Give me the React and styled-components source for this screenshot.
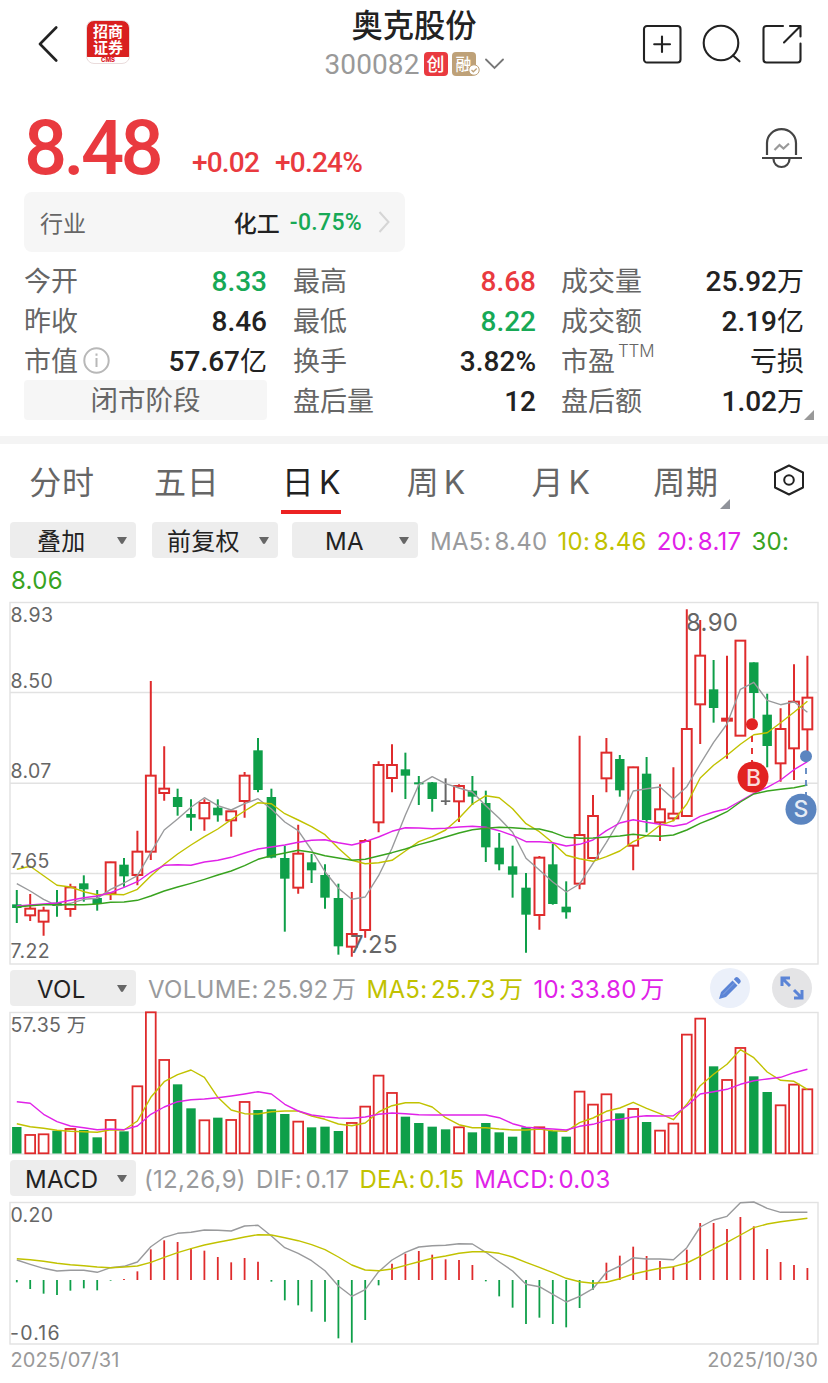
import React from 'react';
import styled, { createGlobalStyle } from 'styled-components';

const GlobalStyle = createGlobalStyle`
  * { box-sizing: border-box; }
  body { margin: 0; background: #fff; }
`;

const RED = '#e93a3f';
const GREEN = '#17a956';
const INK = '#222';
const CHART_FONT = "Inter, 'Noto Sans CJK SC', sans-serif";
const C = { up: '#df2b2c', down: '#0e9f49', gray: '#999a9c', yellow: '#c1c200', pink: '#e022e8', green: '#38a31f', flat: '#666' };

const Page = styled.main`
  width: 828px;
  height: 1383px;
  overflow: hidden;
  background: #fff;
  color: ${INK};
  font-family: Roboto, 'Noto Sans CJK SC', sans-serif;
  white-space: nowrap;
`;

const Header = styled.header`
  display: grid;
  grid-template-columns: 1fr auto 1fr;
  height: 88px;
  padding: 0 26px 0 38px;
`;
const HeaderSide = styled.div`
  display: flex;
  align-items: center;
  justify-content: ${p => (p.$end ? 'flex-end' : 'flex-start')};
  gap: ${p => p.$gap}px;
`;
const Logo = styled.div`
  width: 44px;
  height: 44px;
  margin-top: -4px;
  border-radius: 8px;
  background: linear-gradient(#d9201f 0 36px, #fff 36px);
  border: 1px solid #eadcdc;
  color: #fff;
  text-align: center;
  font: 700 15px/16px 'Noto Sans CJK SC', sans-serif;
  padding-top: 2px;
`;
const LogoCaption = styled.div`
  margin-top: 1px;
  color: #d9201f;
  font: 800 6px/7px Inter, sans-serif;
`;
const TitleBlock = styled.div`
  display: flex;
  flex-direction: column;
  align-items: center;
  transform: translateX(-6px);
`;
const Title = styled.h1`
  margin: 4px 0 3px;
  font: 500 31.3px/40px 'Noto Sans CJK SC', sans-serif;
`;
const CodeRow = styled.div`
  display: flex;
  align-items: center;
  height: 34px;
  color: #999;
  font-size: 28px;
`;
const Code = styled.span`
  margin-right: 4px;
  letter-spacing: 0.1px;
`;
const Badge = styled.span`
  position: relative;
  width: 24px;
  height: 24px;
  margin-right: ${p => p.$right}px;
  border-radius: 4px;
  background: ${p => p.$bg};
  color: #fff;
  text-align: center;
  font: 500 ${p => p.$size}px/23px 'Noto Sans CJK SC', sans-serif;
`;
const BadgeTick = styled.svg`
  position: absolute;
  right: -4px;
  bottom: 0;
`;

const PriceRow = styled.section`
  display: flex;
  align-items: flex-end;
  height: 104px;
  padding: 0 25px 17px 24px;
  color: ${RED};
  font-weight: 500;
`;
const Price = styled.strong`
  font: 500 76px/60px Roboto, sans-serif;
  letter-spacing: -3.7px;
  width: 168px;
  margin-bottom: -3px;
`;
const Change = styled.span`
  font-size: 28px;
  line-height: 30px;
  letter-spacing: -0.8px;
  margin-right: 16px;
  margin-bottom: -3px;
`;
const BellWrap = styled.span`
  margin-left: auto;
  height: 48px;
  svg { display: block; }
`;

const Industry = styled.section`
  display: flex;
  align-items: center;
  width: 381px;
  height: 60px;
  margin-left: 24px;
  padding: 0 15px 0 16px;
  border-radius: 8px;
  background: #f6f6f6;
  color: #666;
  font-size: 23px;
`;
const IndustryName = styled.span`
  margin: 0 10px 0 auto;
  color: ${INK};
  font-weight: 500;
`;
const IndustryChange = styled.span`
  margin-right: 16px;
  color: ${GREEN};
  font-weight: 500;
  letter-spacing: 0.3px;
`;

const Stats = styled.section`
  position: relative;
  display: grid;
  grid-template-columns: 243px 243px 242px;
  grid-auto-rows: 40px;
  column-gap: 26px;
  height: 192px;
  padding: 8px 24px 0 24px;
  border-bottom: 8px solid #f4f4f4;
`;
const Stat = styled.div`
  display: flex;
  justify-content: space-between;
  align-items: center;
  line-height: 40px;
  padding-top: 3px;
  &:nth-child(3n) { margin-left: -1px; }
`;
const StatLabel = styled.span`
  display: flex;
  align-items: center;
  color: #666;
  font-size: 27px;
`;
const StatValue = styled.span`
  color: ${p => p.$color || INK};
  font-size: 28px;
  font-weight: 500;
  span { font-size: 27px; font-weight: 400; }
`;
const Superscript = styled.sup`
  margin-left: 3px;
  font: 300 17px/17px Inter, sans-serif;
  letter-spacing: -0.2px;
  transform: translateY(-10px);
`;
const Phase = styled.div`
  height: 40px;
  border-radius: 4px;
  background: #f6f6f6;
  color: #666;
  text-align: center;
  font-size: 27.5px;
  line-height: 42px;
`;
const Corner = styled.svg`
  position: absolute;
  right: ${p => p.$right}px;
  bottom: ${p => p.$bottom}px;
`;

const Tabs = styled.nav`
  display: grid;
  grid-template-columns: repeat(6, 124.8px) 1fr;
  height: 78px;
`;
const Tab = styled.div`
  position: relative;
  display: flex;
  justify-content: center;
  padding: 15px 1px 0 0;
  height: 70px;
  color: ${p => (p.$active ? INK : '#666')};
  font: 400 32px/48px Inter, 'Noto Sans CJK SC', sans-serif;
  letter-spacing: 0.6px;
  word-spacing: -5px;
  &::after {
    content: '';
    position: absolute;
    bottom: 0;
    width: 60px;
    height: 4px;
    background: ${p => (p.$active ? '#ec2222' : 'transparent')};
  }
`;
const SettingsCell = styled.div`
  padding: 20px 0 0 24px;
`;

const IndicatorBar = styled.div`
  display: flex;
  align-items: center;
  height: ${p => p.$height}px;
  padding: 0 0 ${p => p.$bottom || 0}px 10px;
  font: 400 24px/36px ${CHART_FONT};
`;
const Select = styled.div`
  display: flex;
  align-items: center;
  justify-content: space-between;
  width: 126px;
  height: 36px;
  flex: none;
  margin-right: ${p => p.$right}px;
  padding: 0 8px 0 ${p => p.$left}px;
  border-radius: 4px;
  background: #ededed;
  color: ${INK};
  font-size: 24px;
`;
const SelectLabel = styled.span`
  padding-top: 3px;
  letter-spacing: 0.3px;
`;
const Reading = styled.span`
  margin-right: 10px;
  padding-top: 3px;
  color: ${p => p.$color};
  letter-spacing: 0.3px;
  word-spacing: -3.5px;
`;
const ReadingLine = styled.div`
  height: 40px;
  padding-left: 11px;
  color: ${C.green};
  font: 400 24px/45px ${CHART_FONT};
  letter-spacing: 0.3px;
`;
const RoundButton = styled.span`
  display: grid;
  place-items: center;
  width: 40px;
  height: 40px;
  border-radius: 50%;
  margin-left: ${p => p.$left}px;
  background: ${p => p.$bg};
`;
const Tools = styled.div`
  display: flex;
  margin: 0 16px 0 auto;
`;
const ChartSvg = styled.svg`
  display: block;
  font-family: ${CHART_FONT};
`;
const Dates = styled.footer`
  display: flex;
  justify-content: space-between;
  padding: 1px 10px 0 10.5px;
  color: #999;
  font: 400 20px/22px ${CHART_FONT};
  letter-spacing: 0.15px;
`;

/* Each candle: direction, high, body top, body bottom, low (thirds of a pixel below y=600). */
const candles = `g,870,913,924,969 r,882,926,946,963 r,920,932,965,1007 g,870,908,918,950 r,851,862,927,950 g,826,850,868,905
g,870,894,912,932 r,785,787,880,900 g,774,794,829,860 r,692,755,825,856 r,243,527,755,780 r,439,566,579,602 g,566,591,621,647
g,598,642,653,692 r,598,609,655,692 g,598,623,646,665 r,630,634,661,710 r,516,527,603,653 g,414,451,570,577 g,566,591,773,775
g,737,774,836,995 r,674,761,863,881 g,762,787,811,849 g,793,825,893,926 g,851,894,1039,1064 r,876,1002,1040,1070 r,717,723,990,1013
r,484,495,667,697 r,433,495,534,577 g,458,508,527,597 g,528,547,553,615 g,546,547,597,635 k,535,601,606,615 r,553,558,604,666
g,528,572,590,615 g,572,609,742,786 g,699,743,793,811 g,737,799,824,893 g,819,863,944,1058 r,768,773,945,989 g,732,793,912,914
g,844,920,937,956 r,407,705,851,868 r,585,648,774,776 r,414,458,535,577 g,465,477,571,590 r,500,502,737,811 g,471,521,660,697
r,553,628,667,723 r,502,641,655,664 r,28,387,648,650 r,60,167,313,432 g,180,268,324,368 r,167,356,362,476 r,122,122,407,408
g,187,187,279,356 g,281,344,438,502 r,325,387,490,545 r,193,305,445,540 r,167,293,388,455`
  .split(/\s+/)
  .map(s => s.split(',').map((v, i) => (i ? Number(v) : v)));

const ma5 = [851,873,898,917,910,898,895,868,849,827,758,690,657,622,593,617,630,611,596,627,666,692,750,815,865,898,891,827,745,645,554,530,551,564,576,617,655,697,775,810,846,876,852,790,727,660,573,566,561,597,560,492,427,372,268,247,301,314,305,337];
const ma10 = [808,799,827,856,861,875,884,883,884,868,828,793,762,735,710,687,659,633,608,611,641,660,680,704,745,781,791,788,781,753,725,710,690,655,612,587,593,626,671,695,728,766,776,784,770,753,725,707,676,662,612,534,496,466,433,404,398,368,337,304];
const ma20 = [918,915,912,909,901,893,888,878,862,845,817,796,794,796,786,781,772,759,747,741,735,727,721,719,728,735,725,711,694,683,684,686,685,681,679,682,692,706,725,725,728,738,733,720,692,669,659,667,673,679,671,649,636,626,603,580,562,540,509,485];
const ma30 = [921,917,914,914,914,914,912,907,906,901,888,873,861,850,838,825,813,797,778,767,759,751,757,767,774,781,778,768,758,747,734,723,711,699,689,685,682,683,686,687,697,712,715,714,711,708,703,707,709,705,690,670,654,635,606,582,573,568,563,555];

const volumes = [486,509,507,497,491,495,517,464,499,363,141,284,358,430,465,458,464,410,435,433,447,469,487,485,498,473,424,331,383,455,474,485,493,486,502,474,502,515,487,486,498,515,379,418,387,445,431,471,496,475,208,160,304,344,248,334,381,420,358,372];
const vol5 = [476,485,490,496,499,500,502,494,495,468,397,350,329,315,337,397,435,446,447,440,438,438,453,463,477,482,474,441,422,413,413,426,458,479,488,488,492,495,495,492,497,499,473,459,439,429,412,430,446,464,418,362,328,298,254,278,321,346,349,373];
const vol10 = [410,415,448,470,483,488,494,492,494,483,448,426,410,404,402,398,393,387,380,387,418,438,450,455,459,460,456,448,444,446,449,450,450,450,450,450,458,476,487,490,492,495,484,478,466,463,456,452,453,452,423,387,380,373,358,347,342,337,323,313];

const macd = [382,402,416,420,407,400,406,377,372,349,283,256,261,279,287,306,322,309,320,380,436,451,470,500,550,563,495,391,326,296,288,299,313,315,330,379,424,458,507,488,507,517,459,404,323,302,275,303,318,334,284,204,204,222,186,214,282,321,330,339];
const dif = [315,328,340,348,346,346,352,338,334,321,275,247,235,232,225,226,228,213,211,243,278,295,317,347,393,424,404,350,315,292,276,272,271,266,267,292,320,348,388,395,418,441,424,401,352,333,308,312,312,314,278,216,195,184,143,141,160,172,172,172];
const dea = [311,314,319,325,329,332,336,338,336,333,322,307,293,281,270,262,254,246,239,240,248,257,269,284,306,330,345,347,342,331,320,310,303,295,290,290,295,306,322,337,353,370,380,385,382,371,357,348,340,335,324,304,282,262,240,218,207,200,195,190];

const xAt = i => 16.8 + i * 13.4;

function Line({ data, top, color }) {
  return (
    <polyline
      points={data.map((v, i) => `${xAt(i).toFixed(1)},${(top + v / 3).toFixed(1)}`).join(' ')}
      fill="none"
      stroke={color}
      strokeWidth="1.4"
      strokeLinejoin="round"
    />
  );
}

function Candle({ index, data }) {
  const [kind, high, bodyTop, bodyBottom, low] = data;
  const x = xAt(index);
  const [h, t, b, l] = [high, bodyTop, bodyBottom, low].map(v => 600 + v / 3);
  if (kind === 'r') {
    return (
      <g stroke={C.up} strokeWidth="2">
        <path d={`M${x} ${h}V${t}M${x} ${b}V${l}`} />
        <rect x={x - 4.9} y={t} width="9.8" height={b - t} fill="none" />
      </g>
    );
  }
  const color = kind === 'g' ? C.down : C.flat;
  return (
    <g>
      <path d={`M${x} ${h}V${l}`} stroke={color} strokeWidth="2" />
      <rect x={x - 4.7} y={t} width="9.4" height={b - t} fill={color} />
    </g>
  );
}

function PriceChart() {
  return (
    <ChartSvg width="828" height="368" viewBox="0 598 828 368">
      <g fill="none" stroke="#e2e2e2" strokeWidth="1.4">
        <rect x="10" y="602.5" width="808" height="361.5" />
        <path d="M10 692.5H818M10 783.3H818M10 873.5H818" />
      </g>
      {candles.map((c, i) => <Candle key={i} index={i} data={c} />)}
      <Line data={ma5} top={600} color={C.gray} />
      <Line data={ma10} top={600} color={C.yellow} />
      <Line data={ma20} top={600} color={C.pink} />
      <Line data={ma30} top={600} color={C.green} />
      <g fill="#666" fontSize="19.5" letterSpacing="0.4">
        <text x="10.5" y="622">8.93</text>
        <text x="10.5" y="688">8.50</text>
        <text x="10.5" y="778">8.07</text>
        <text x="10.5" y="868">7.65</text>
        <text x="10.5" y="958">7.22</text>
      </g>
      <g fill="#666" fontSize="24" letterSpacing="0.3">
        <text x="686" y="631">8.90</text>
        <text x="350" y="952.5">7.25</text>
      </g>
      <circle cx="752" cy="724.3" r="6" fill="#e22222" />
      <path d="M752 736V762" stroke="#e22222" strokeWidth="1.8" strokeDasharray="6 6" />
      <circle cx="753" cy="777" r="15.5" fill="#e22222" />
      <circle cx="806" cy="756.3" r="6" fill="#5b85c0" />
      <path d="M806 768V796" stroke="#5b85c0" strokeWidth="1.8" strokeDasharray="6 6" />
      <circle cx="801" cy="809.3" r="15.5" fill="#5b85c0" />
      <g fill="#fff" fillOpacity=".85" fontSize="23" fontWeight="500" textAnchor="middle">
        <text x="753.5" y="786">B</text>
        <text x="801" y="817.3">S</text>
      </g>
    </ChartSvg>
  );
}

function VolumeChart() {
  return (
    <ChartSvg width="828" height="148" viewBox="0 1010 828 148">
      <rect x="10" y="1012.5" width="808" height="141.5" fill="none" stroke="#e2e2e2" strokeWidth="1.4" />
      {volumes.map((v, i) => {
        const y = 965 + v / 3;
        return candles[i][0] === 'r' ? (
          <rect key={i} x={xAt(i) - 4.9} y={y + 0.3} width="9.8" height={1153 - y} fill="none" stroke={C.up} strokeWidth="1.8" />
        ) : (
          <rect key={i} x={xAt(i) - 4.7} y={y} width="9.4" height={1153.5 - y} fill={C.down} />
        );
      })}
      <Line data={vol5} top={965} color={C.yellow} />
      <Line data={vol10} top={965} color={C.pink} />
      <text x="10.5" y="1032" fill="#666" fontSize="19.5" letterSpacing="0.2">57.35 万</text>
    </ChartSvg>
  );
}

function MacdChart() {
  return (
    <ChartSvg width="828" height="148" viewBox="0 1200 828 148">
      <rect x="10" y="1202.5" width="808" height="141.5" fill="none" stroke="#e2e2e2" strokeWidth="1.4" />
      {macd.map((v, i) => (
        <path key={i} d={`M${xAt(i)} 1280V${1155 + v / 3}`} stroke={v < 375 ? C.up : C.down} strokeWidth="1.8" />
      ))}
      <Line data={dif} top={1155} color={C.gray} />
      <Line data={dea} top={1155} color={C.yellow} />
      <g fill="#666" fontSize="19.5">
        <text x="10.5" y="1222" letterSpacing="0.3">0.20</text>
        <text x="10" y="1340" letterSpacing="1.2">-0.16</text>
      </g>
    </ChartSvg>
  );
}

function HeaderIcon({ children, width = 40 }) {
  return (
    <svg width={width} height="40" viewBox={`0 0 ${width} 40`} fill="none" stroke="#222" strokeWidth="2.1" strokeLinecap="round" strokeLinejoin="round">
      {children}
    </svg>
  );
}

function Picker({ label, right, left }) {
  return (
    <Select $right={right} $left={left}>
      <SelectLabel>{label}</SelectLabel>
      <svg width="12" height="9" viewBox="0 0 12 9"><path d="M1 1H11L7.2 7.2Q6 8.6 4.8 7.2Z" fill="#666" /></svg>
    </Select>
  );
}

const InfoSvg = styled.svg`
  margin: -3px 0 0 5px;
`;
const InfoIcon = () => (
  <InfoSvg width="27" height="27" viewBox="0 0 27 27" fill="none" stroke="#b8b8b8" strokeWidth="2">
    <circle cx="13.5" cy="13.5" r="12.2" />
    <path d="M13.5 11V20M13.5 6.5V8.8" />
  </InfoSvg>
);

const stats = [
  { label: '今开', value: '8.33', color: GREEN }, { label: '最高', value: '8.68', color: RED }, { label: '成交量', value: '25.92', unit: '万' },
  { label: '昨收', value: '8.46' }, { label: '最低', value: '8.22', color: GREEN }, { label: '成交额', value: '2.19', unit: '亿' },
  { label: '市值', value: '57.67', unit: '亿', info: true }, { label: '换手', value: '3.82%' }, { label: '市盈', value: '', unit: '亏损', sup: 'TTM' },
  { phase: '闭市阶段' }, { label: '盘后量', value: '12' }, { label: '盘后额', value: '1.02', unit: '万' },
];

export default function App() {
  return (
    <Page>
      <GlobalStyle />
      <Header>
        <HeaderSide $gap={28}>
          <svg width="20" height="36" viewBox="0 0 20 36" fill="none" stroke="#222" strokeWidth="2.6" strokeLinecap="round" strokeLinejoin="round"><path d="M18.2 1.5L2 18L18.2 34.5" /></svg>
          <Logo>招商<br />证券<LogoCaption>CMS</LogoCaption></Logo>
        </HeaderSide>
        <TitleBlock>
          <Title>奥克股份</Title>
          <CodeRow>
            <Code>300082</Code>
            <Badge $bg={RED} $size={18} $right={4}>创</Badge>
            <Badge $bg="#bea178" $size={16} $right={9}>
              融
              <BadgeTick width="12" height="12" viewBox="0 0 12 12" fill="none"><circle cx="6" cy="6" r="5.2" fill="#fff" stroke="#bea178" /><path d="M3.5 6L5.3 7.8L8.7 4.5" stroke="#bea178" strokeWidth="1.3" /></BadgeTick>
            </Badge>
            <svg width="19" height="12" viewBox="0 0 19 12" fill="none" stroke="#777" strokeWidth="1.8" strokeLinecap="round"><path d="M1 1.5L9.5 10L18 1.5" /></svg>
          </CodeRow>
        </TitleBlock>
        <HeaderSide $end $gap={20}>
          <HeaderIcon><rect x="2" y="2" width="36.5" height="36.5" rx="3" /><path d="M20 12.5V28M12.2 20.2H28" /></HeaderIcon>
          <HeaderIcon><circle cx="19" cy="19" r="17.3" /><path d="M31 31.5L37.5 37.3" /></HeaderIcon>
          <HeaderIcon><path d="M21 2H4.5Q1.5 2 1.5 5V35.5Q1.5 38.5 4.5 38.5H35.5Q38.5 38.5 38.5 35.5V19.5M28 2H38.5V12.5M37.5 3L22 18.5" /></HeaderIcon>
        </HeaderSide>
      </Header>

      <PriceRow>
        <Price>8.48</Price>
        <Change>+0.02</Change>
        <Change>+0.24%</Change>
        <BellWrap>
          <svg width="42" height="42" viewBox="0 0 42 42" fill="none" stroke="#444" strokeWidth="2.2">
            <path d="M6 28V16A14.5 13.8 0 0 1 35 16V28M1 31H41M12.5 32A8 8 0 0 0 28.5 32" />
            <path d="M13.5 23L18.5 18L22.5 21.5L28 16.5" stroke="#999" />
          </svg>
        </BellWrap>
      </PriceRow>

      <Industry>
        行业
        <IndustryName>化工</IndustryName>
        <IndustryChange>-0.75%</IndustryChange>
        <svg width="12" height="22" viewBox="0 0 12 22" fill="none" stroke="#d5d5d5" strokeWidth="2"><path d="M1.5 1L10.5 11L1.5 21" /></svg>
      </Industry>

      <Stats>
        {stats.map(s =>
          s.phase ? <Phase key={s.phase}>{s.phase}</Phase> : (
            <Stat key={s.label}>
              <StatLabel>{s.label}{s.info && <InfoIcon />}{s.sup && <Superscript>{s.sup}</Superscript>}</StatLabel>
              <StatValue $color={s.color}>{s.value}{s.unit && <span>{s.unit}</span>}</StatValue>
            </Stat>
          )
        )}
        <Corner $right={14} $bottom={16} width="10" height="10"><path d="M10 0V10H0Z" fill="#999" /></Corner>
      </Stats>

      <Tabs>
        {['分时', '五日', '日 K', '周 K', '月 K', '周期'].map(t => (
          <Tab key={t} $active={t === '日 K'}>
            {t}
            {t === '周期' && <Corner $right={19} $bottom={5} width="10" height="10"><path d="M10 0V10H0Z" fill="#90939a" /></Corner>}
          </Tab>
        ))}
        <SettingsCell>
          <svg width="32" height="32" viewBox="0 0 32 32" fill="none" stroke="#222" strokeWidth="2" strokeLinejoin="round"><path d="M16 1.5L30 8.5V23.5L16 30.5L2 23.5V8.5Z" /><circle cx="16" cy="16" r="4.8" /></svg>
        </SettingsCell>
      </Tabs>

      <IndicatorBar $height={36}>
        <Picker label="叠加" left={27} right={16} />
        <Picker label="前复权" left={15} right={14} />
        <Picker label="MA" left={33} right={12} />
        <Reading $color={C.gray}>MA5: 8.40</Reading>
        <Reading $color={C.yellow}>10: 8.46</Reading>
        <Reading $color={C.pink}>20: 8.17</Reading>
        <Reading $color={C.green}>30:</Reading>
      </IndicatorBar>
      <ReadingLine>8.06</ReadingLine>

      <PriceChart />

      <IndicatorBar $height={44}>
        <Picker label="VOL" left={27} right={12} />
        <Reading $color={C.gray}>VOLUME: 25.92 万</Reading>
        <Reading $color={C.yellow}>MA5: 25.73 万</Reading>
        <Reading $color={C.pink}>10: 33.80 万</Reading>
        <Tools>
          <RoundButton $bg="#ebf0fa" $left={0}>
            <svg width="24" height="24" viewBox="0 0 24 24" fill="#5b84d6"><path d="M1 23L3 16L14.5 4.5L19.5 9.5L8 21ZM15.8 3.2L17.4 1.6Q18.7 .5 20 1.6L22.2 3.8Q23.5 5.2 22.2 6.7L20.7 8.2Z" /><path d="M5 18.5L16.2 7.2" stroke="#87a5e0" strokeWidth="1" /></svg>
          </RoundButton>
          <RoundButton $bg="#e4e4e6" $left={22}>
            <svg width="24" height="24" viewBox="0 0 24 24" fill="none" stroke="#5b84d6" strokeWidth="3"><path d="M2 10V2H10M2.5 2.5L10 10M22 14V22H14M21.5 21.5L14 14" /></svg>
          </RoundButton>
        </Tools>
      </IndicatorBar>
      <VolumeChart />

      <IndicatorBar $height={42} $bottom={2}>
        <Picker label="MACD" left={15} right={8} />
        <Reading $color={C.gray}>(12,26,9)</Reading>
        <Reading $color={C.gray}>DIF: 0.17</Reading>
        <Reading $color={C.yellow}>DEA: 0.15</Reading>
        <Reading $color={C.pink}>MACD: 0.03</Reading>
      </IndicatorBar>
      <MacdChart />
      <Dates><span>2025/07/31</span><span>2025/10/30</span></Dates>
    </Page>
  );
}
